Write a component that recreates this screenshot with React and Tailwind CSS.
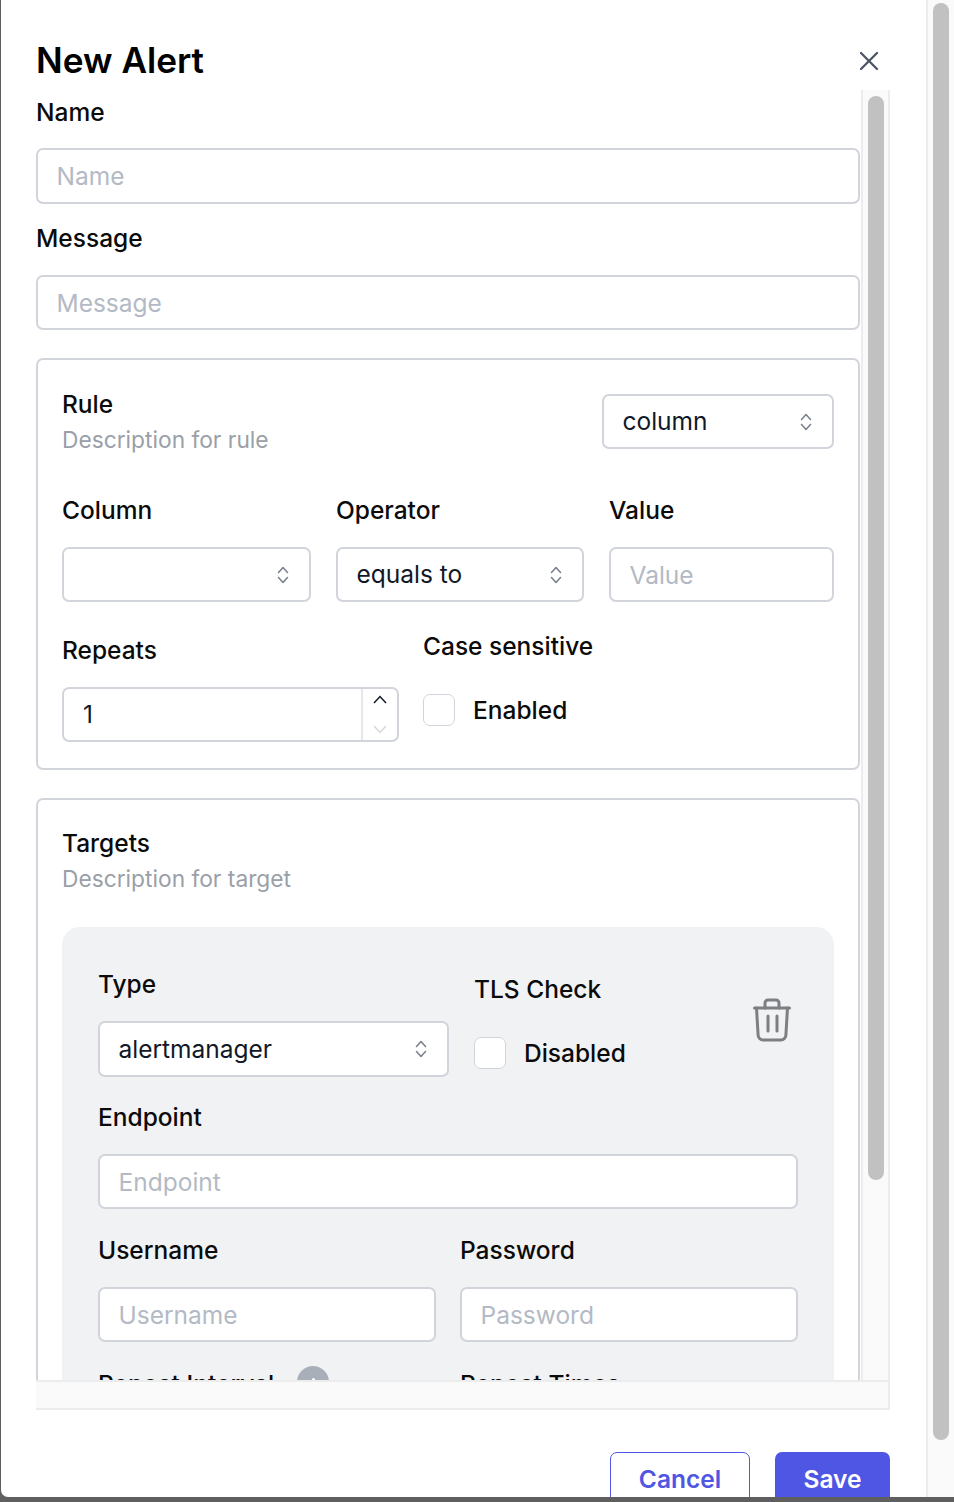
import React from 'react';

const labelClass = 'block text-[24.5px] leading-[36px] font-medium text-[#0b0b0b]';
const descClass = 'text-[22.75px] leading-[36px] text-[#9a9fa8]';
const fieldClass = 'block w-full bg-white border-2 border-[#d1d5db] rounded-[7px] px-[18.5px] text-[24.5px] text-[#111827] placeholder:text-[#b3bac5] outline-none';

const Selector = () => (
  <svg width="12" height="18" viewBox="0 0 12 18" fill="none" stroke="#7b828e" strokeWidth="1.6" strokeLinecap="round" strokeLinejoin="round" className="shrink-0">
    <path d="M1.5 6.5 6 1.5l4.5 5" />
    <path d="M1.5 11.5 6 16.5l4.5-5" />
  </svg>
);

const SelectBox = ({ value, className = '' }) => (
  <div className={`flex items-center justify-between bg-white border-2 border-[#d1d5db] rounded-[7px] pl-[18.5px] pr-[20px] text-[24.5px] text-[#111827] ${className}`}>
    <span>{value}</span>
    <Selector />
  </div>
);

const Checkbox = ({ label }) => (
  <label className="flex items-center">
    <input type="checkbox" className="appearance-none w-[32px] h-[32px] bg-white border border-[#d1d5db] rounded-[7px]" />
    <span className="ml-[18px] text-[24.5px] leading-[36px] font-medium text-[#0b0b0b]">{label}</span>
  </label>
);

const TrashIcon = () => (
  <svg width="38" height="44" viewBox="0 0 38 44" fill="none" stroke="#7d7f82" strokeWidth="3" strokeLinecap="round" strokeLinejoin="round">
    <path d="M1.5 10h35" />
    <path d="M12 10V5a3 3 0 0 1 3-3h8a3 3 0 0 1 3 3v5" />
    <path d="M3.5 10l1.6 27a5 5 0 0 0 5 5h17.8a5 5 0 0 0 5-5l1.6-27" />
    <path d="M15 18v15M24 18v15" />
  </svg>
);

const RuleCard = () => (
  <section className="mt-[28px] border-2 border-[#d1d5db] rounded-[7px] px-[24px] pt-[26px] pb-[26px]">
    <div className="flex justify-between">
      <div>
        <div className={labelClass}>Rule</div>
        <div className={descClass}>Description for rule</div>
      </div>
      <SelectBox value="column" className="w-[232px] h-[55px] mt-[8px]" />
    </div>
    <div className="grid grid-cols-[249px_248px_1fr] gap-x-[25px] mt-[34px]">
      <div>
        <label className={labelClass}>Column</label>
        <SelectBox value="" className="h-[55px] mt-[19px]" />
      </div>
      <div>
        <label className={labelClass}>Operator</label>
        <SelectBox value="equals to" className="h-[55px] mt-[19px]" />
      </div>
      <div>
        <label className={labelClass}>Value</label>
        <input placeholder="Value" className={`${fieldClass} h-[55px] mt-[19px]`} />
      </div>
    </div>
    <div className="flex gap-x-[24px] mt-[26px]">
      <div className="w-[337px] pt-[4px]">
        <label className={labelClass}>Repeats</label>
        <div className="flex h-[55px] mt-[19px] bg-white border-2 border-[#d1d5db] rounded-[7px]">
          <span className="flex-1 flex items-center pl-[19px] text-[24.5px] text-[#111827]">1</span>
          <div className="w-[36px] flex flex-col items-center justify-between border-l-2 border-[#e5e7eb] py-[6px]">
            <svg width="14" height="9" viewBox="0 0 14 9" fill="none" stroke="#111827" strokeWidth="1.5"><path d="M1 8l6-6.5L13 8" /></svg>
            <svg width="14" height="9" viewBox="0 0 14 9" fill="none" stroke="#d5d8dd" strokeWidth="1.5"><path d="M1 1l6 6.5L13 1" /></svg>
          </div>
        </div>
      </div>
      <div>
        <label className={labelClass}>Case sensitive</label>
        <div className="mt-[28px]">
          <Checkbox label="Enabled" />
        </div>
      </div>
    </div>
  </section>
);

const TargetsCard = () => (
  <section className="mt-[28px] border-2 border-[#d1d5db] rounded-[7px] px-[24px] pt-[25px]">
    <div className={labelClass}>Targets</div>
    <div className={descClass}>Description for target</div>
    <div className="mt-[30px] bg-[#f1f2f4] rounded-[18px] px-[36px] pt-[39px] pb-[40px]">
      <div className="flex">
        <div className="w-[351px]">
          <label className={labelClass}>Type</label>
          <SelectBox value="alertmanager" className="h-[56px] mt-[19px]" />
        </div>
        <div className="ml-[25px] flex-1 pt-[5px]">
          <label className={labelClass}>TLS Check</label>
          <div className="mt-[28px]">
            <Checkbox label="Disabled" />
          </div>
        </div>
        <button className="shrink-0 self-start mt-[32px] mr-[7px]"><TrashIcon /></button>
      </div>
      <label className={`${labelClass} mt-[22px]`}>Endpoint</label>
      <input placeholder="Endpoint" className={`${fieldClass} h-[55px] mt-[19px]`} />
      <div className="grid grid-cols-2 gap-x-[24px] mt-[23px]">
        <div>
          <label className={labelClass}>Username</label>
          <input placeholder="Username" className={`${fieldClass} h-[55px] mt-[19px]`} />
        </div>
        <div>
          <label className={labelClass}>Password</label>
          <input placeholder="Password" className={`${fieldClass} h-[55px] mt-[19px]`} />
        </div>
      </div>
      <div className="grid grid-cols-2 gap-x-[24px] mt-[24px]">
        <div className="flex items-start">
          <label className={labelClass}>Repeat Interval</label>
          <span className="ml-[23px] w-[32px] h-[32px] rounded-full bg-[#a9afb9] flex justify-center pt-[12px]">
            <span className="w-[3px] h-[3px] rounded-full bg-white" />
          </span>
        </div>
        <label className={labelClass}>Repeat Times</label>
      </div>
    </div>
  </section>
);

export default function App() {
  return (
    <div className="w-[954px] h-[1502px] overflow-hidden bg-[#5f5f5f] font-['Inter',sans-serif]">
      <div className="flex h-[1497px]">
        <div className="flex-1 ml-px bg-white rounded-bl-[7px] pl-[35px] pr-[36px] overflow-hidden">
          <header className="flex items-start justify-between h-[90px] pt-[38px] pr-[5px]">
            <h1 className="text-[35.2px] leading-[44px] font-semibold text-black">New Alert</h1>
            <svg width="32" height="32" viewBox="0 0 24 24" fill="none" stroke="#4b5563" strokeWidth="1.7" strokeLinecap="round" strokeLinejoin="round" className="mt-[7px]">
              <path d="M6 18 18 6M6 6l12 12" />
            </svg>
          </header>

          <div className="flex h-[1290px]">
            <form className="w-[825px] overflow-hidden pr-[1px] pt-[4px]">
              <label className={labelClass}>Name</label>
              <input placeholder="Name" className={`${fieldClass} h-[56px] mt-[18px]`} />
              <label className={`${labelClass} mt-[16px]`}>Message</label>
              <input placeholder="Message" className={`${fieldClass} h-[55px] mt-[19px]`} />
              <RuleCard />
              <TargetsCard />
            </form>
            <div className="w-[29px] bg-[#fafafa] border-x-2 border-[#ececec] px-[5px] pt-[6px]">
              <div className="w-[16px] h-[1084px] rounded-full bg-[#c1c1c1]" />
            </div>
          </div>
          <div className="h-[30px] bg-[#fafafa] border-y-2 border-[#ececec] border-r-2" />

          <footer className="flex justify-end gap-x-[25px] mt-[42px]">
            <button className="w-[140px] h-[55px] bg-white border border-[#4f56e3] rounded-[7px] text-[24.5px] font-semibold text-[#4f56e3]">Cancel</button>
            <button className="w-[115px] h-[55px] bg-[#4f56e3] rounded-[7px] text-[24.5px] font-semibold text-white">Save</button>
          </footer>
        </div>

        <div className="w-[28px] bg-[#fafafa] border-l-2 border-[#ececec] pl-[5px] pt-[3px]">
          <div className="w-[16px] h-[1437px] rounded-full bg-[#c1c1c1]" />
        </div>
      </div>
    </div>
  );
}
